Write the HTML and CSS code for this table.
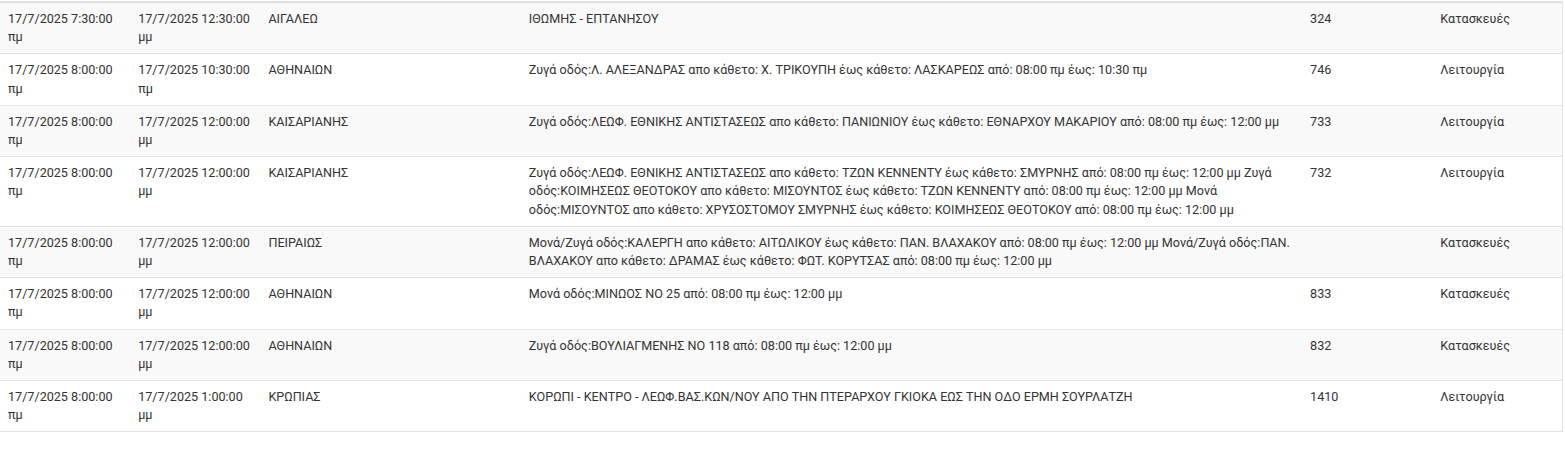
FILE: index.html
```html
<!DOCTYPE html>
<html lang="el">
<head>
<meta charset="utf-8">
<title>Έργα</title>
<link rel="stylesheet" href="styles.css">
</head>
<body>
<div class="wrap">
<table class="grid">
<colgroup>
<col class="c1"><col class="c1"><col class="c2"><col class="c6"><col class="c1"><col class="c1">
</colgroup>
<tbody>
<tr>
<td>17/7/2025 7:30:00 πμ</td><td>17/7/2025 12:30:00 μμ</td><td>ΑΙΓΑΛΕΩ</td><td>ΙΘΩΜΗΣ - ΕΠΤΑΝΗΣΟΥ</td><td>324</td><td>Κατασκευές</td>
</tr>
<tr>
<td>17/7/2025 8:00:00 πμ</td><td>17/7/2025 10:30:00 πμ</td><td>ΑΘΗΝΑΙΩΝ</td><td>Ζυγά οδός:Λ. ΑΛΕΞΑΝΔΡΑΣ απο κάθετο: Χ. ΤΡΙΚΟΥΠΗ έως κάθετο: ΛΑΣΚΑΡΕΩΣ από: 08:00 πμ έως: 10:30 πμ</td><td>746</td><td>Λειτουργία</td>
</tr>
<tr>
<td>17/7/2025 8:00:00 πμ</td><td>17/7/2025 12:00:00 μμ</td><td>ΚΑΙΣΑΡΙΑΝΗΣ</td><td>Ζυγά οδός:ΛΕΩΦ. ΕΘΝΙΚΗΣ ΑΝΤΙΣΤΑΣΕΩΣ απο κάθετο: ΠΑΝΙΩΝΙΟΥ έως κάθετο: ΕΘΝΑΡΧΟΥ ΜΑΚΑΡΙΟΥ από: 08:00 πμ έως: 12:00 μμ</td><td>733</td><td>Λειτουργία</td>
</tr>
<tr>
<td>17/7/2025 8:00:00 πμ</td><td>17/7/2025 12:00:00 μμ</td><td>ΚΑΙΣΑΡΙΑΝΗΣ</td><td>Ζυγά οδός:ΛΕΩΦ. ΕΘΝΙΚΗΣ ΑΝΤΙΣΤΑΣΕΩΣ απο κάθετο: ΤΖΩΝ ΚΕΝΝΕΝΤΥ έως κάθετο: ΣΜΥΡΝΗΣ από: 08:00 πμ έως: 12:00 μμ Ζυγά οδός:ΚΟΙΜΗΣΕΩΣ ΘΕΟΤΟΚΟΥ απο κάθετο: ΜΙΣΟΥΝΤΟΣ έως κάθετο: ΤΖΩΝ ΚΕΝΝΕΝΤΥ από: 08:00 πμ έως: 12:00 μμ Μονά οδός:ΜΙΣΟΥΝΤΟΣ απο κάθετο: ΧΡΥΣΟΣΤΟΜΟΥ ΣΜΥΡΝΗΣ έως κάθετο: ΚΟΙΜΗΣΕΩΣ ΘΕΟΤΟΚΟΥ από: 08:00 πμ έως: 12:00 μμ</td><td>732</td><td>Λειτουργία</td>
</tr>
<tr>
<td>17/7/2025 8:00:00 πμ</td><td>17/7/2025 12:00:00 μμ</td><td>ΠΕΙΡΑΙΩΣ</td><td>Μονά/Ζυγά οδός:ΚΑΛΕΡΓΗ απο κάθετο: ΑΙΤΩΛΙΚΟΥ έως κάθετο: ΠΑΝ. ΒΛΑΧΑΚΟΥ από: 08:00 πμ έως: 12:00 μμ Μονά/Ζυγά οδός:ΠΑΝ. ΒΛΑΧΑΚΟΥ απο κάθετο: ΔΡΑΜΑΣ έως κάθετο: ΦΩΤ. ΚΟΡΥΤΣΑΣ από: 08:00 πμ έως: 12:00 μμ</td><td></td><td>Κατασκευές</td>
</tr>
<tr>
<td>17/7/2025 8:00:00 πμ</td><td>17/7/2025 12:00:00 μμ</td><td>ΑΘΗΝΑΙΩΝ</td><td>Μονά οδός:ΜΙΝΩΟΣ ΝΟ 25 από: 08:00 πμ έως: 12:00 μμ</td><td>833</td><td>Κατασκευές</td>
</tr>
<tr>
<td>17/7/2025 8:00:00 πμ</td><td>17/7/2025 12:00:00 μμ</td><td>ΑΘΗΝΑΙΩΝ</td><td>Ζυγά οδός:ΒΟΥΛΙΑΓΜΕΝΗΣ ΝΟ 118 από: 08:00 πμ έως: 12:00 μμ</td><td>832</td><td>Κατασκευές</td>
</tr>
<tr>
<td>17/7/2025 8:00:00 πμ</td><td>17/7/2025 1:00:00 μμ</td><td>ΚΡΩΠΙΑΣ</td><td>ΚΟΡΩΠΙ - ΚΕΝΤΡΟ - ΛΕΩΦ.ΒΑΣ.ΚΩΝ/ΝΟΥ ΑΠΟ ΤΗΝ ΠΤΕΡΑΡΧΟΥ ΓΚΙΟΚΑ ΕΩΣ ΤΗΝ ΟΔΟ ΕΡΜΗ ΣΟΥΡΛΑΤΖΗ</td><td>1410</td><td>Λειτουργία</td>
</tr>
</tbody>
</table>
</div>
</body>
</html>
```

FILE: styles.css
```css
html, body {
  margin: 0;
  padding: 0;
  background: #fff;
}
body {
  font-family: Roboto, "Noto Sans", "DejaVu Sans", sans-serif;
  font-size: 12.6px;
  line-height: 18.2px;
  color: #333;
}
.wrap {
  width: 1564px;
  padding-top: 1px;
}
.grid {
  width: 1563px;
  table-layout: fixed;
  border-collapse: collapse;
  border-top: 2px solid #e2e2e2;
  border-right: 1px solid #e6e6e6;
}
.c1 { width: 8.3333%; }
.c2 { width: 16.6667%; }
.c6 { width: 50%; }
.grid td {
  padding: 7px 8px;
  vertical-align: top;
  text-align: left;
  border-bottom: 1px solid #e4e4e4;
}
.grid tbody tr:nth-child(odd) td {
  background: #f9f9f9;
}
```
